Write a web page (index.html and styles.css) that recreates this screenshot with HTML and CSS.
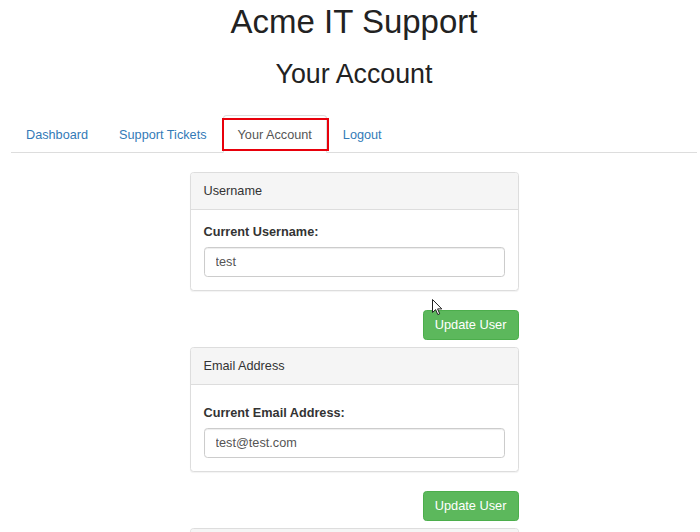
FILE: index.html
```html
<!DOCTYPE html>
<html lang="en">
<head>
<meta charset="utf-8">
<title>Acme IT Support - Your Account</title>
<link rel="stylesheet" href="styles.css">
</head>
<body>
<header class="page-header">
  <h1 class="site-title">Acme IT Support</h1>
  <h2 class="page-title">Your Account</h2>
</header>
<nav>
  <ul class="tabs">
    <li><a class="tab" href="#">Dashboard</a></li>
    <li><a class="tab" href="#">Support Tickets</a></li>
    <li><a class="tab active" href="#">Your Account<span class="highlight"></span></a></li>
    <li><a class="tab" href="#">Logout</a></li>
  </ul>
</nav>
<main class="account">
  <section class="panel">
    <div class="panel-heading">Username</div>
    <div class="panel-body">
      <label class="field-label" for="username">Current Username:</label>
      <input class="field-input" id="username" type="text" value="test">
    </div>
  </section>
  <div class="actions"><button class="btn-success" type="button">Update User</button></div>
  <section class="panel">
    <div class="panel-heading">Email Address</div>
    <div class="panel-body panel-body-spaced">
      <label class="field-label" for="email">Current Email Address:</label>
      <input class="field-input" id="email" type="text" value="test@test.com">
    </div>
  </section>
  <div class="actions"><button class="btn-success" type="button">Update User</button></div>
  <section class="panel panel-partial">
    <div class="panel-heading panel-heading-empty"></div>
  </section>
</main>
<svg class="cursor" width="12" height="18" viewBox="0 0 12 18" aria-hidden="true">
  <path d="M0.5 0.5 L0.5 13.5 L3.6 10.6 L5.8 15.6 L7.7 14.8 L5.6 9.9 L9.8 9.9 Z" fill="#fff" stroke="#222" stroke-width="1" stroke-linejoin="round"/>
</svg>
</body>
</html>
```
FILE: styles.css
```css
html {
  overflow: hidden;
}

body {
  margin: 0;
  padding: 0 3px 0 11px;
  position: relative;
  background: #fff;
  color: #333;
  font-family: "Liberation Sans", Arial, Helvetica, sans-serif;
  font-size: 12.7px;
  line-height: 18px;
}

.page-header {
  text-align: center;
}

.site-title {
  margin: 4px 0 0;
  font-size: 33px;
  line-height: 36px;
  font-weight: 500;
  color: #222;
}

.page-title {
  margin: 19px 0 0;
  font-size: 26.8px;
  line-height: 30px;
  font-weight: 500;
  color: #222;
}

nav {
  margin-top: 26px;
}

.tabs {
  display: flex;
  list-style: none;
  margin: 0;
  padding: 0;
  border-bottom: 1px solid #ddd;
}

.tabs li {
  margin-bottom: -1px;
}

.tab {
  position: relative;
  display: block;
  padding: 10px 14px 8px;
  margin-right: 1px;
  line-height: 18px;
  border: 1px solid transparent;
  border-radius: 3.6px 3.6px 0 0;
  color: #337ab7;
  text-decoration: none;
}

.tab.active {
  color: #555;
  background: #fff;
  border-color: #ddd #ddd transparent;
}

.highlight {
  position: absolute;
  left: -2px;
  top: 2px;
  right: -3px;
  bottom: 1px;
  border: 2px solid #e8000b;
}

.account {
  width: 329px;
  margin: 19px auto 0;
}

.panel {
  background: #fff;
  border: 1px solid #ddd;
  border-radius: 3.6px;
  box-shadow: 0 1px 1px rgba(0, 0, 0, 0.05);
}

.panel-heading {
  padding: 9px 13px;
  line-height: 18px;
  background: #f5f5f5;
  border-bottom: 1px solid #ddd;
  border-radius: 3px 3px 0 0;
  color: #333;
}

.panel-heading-empty {
  height: 18px;
}

.panel-body {
  padding: 13px 13px 13.5px;
}

.panel-body-spaced {
  padding-top: 19.5px;
}

.field-label {
  display: block;
  margin-bottom: 5.5px;
  font-weight: bold;
  line-height: 18px;
  color: #333;
}

.field-input {
  display: block;
  box-sizing: border-box;
  width: 100%;
  height: 30px;
  margin: 0;
  padding: 0 11px;
  border: 1px solid #ccc;
  border-radius: 3.6px;
  box-shadow: inset 0 1px 1px rgba(0, 0, 0, 0.075);
  font-family: inherit;
  font-size: 12.7px;
  color: #555;
  background: #fff;
}

.actions {
  display: flex;
  justify-content: flex-end;
  margin: 18.5px 0 7px;
}

.btn-success {
  box-sizing: border-box;
  height: 30px;
  padding: 1px 11px 0;
  border: 1px solid #4cae4c;
  border-radius: 3.6px;
  background: #5cb85c;
  color: #fff;
  font-family: inherit;
  font-size: 12.8px;
  line-height: 18px;
}

.cursor {
  position: absolute;
  left: 432px;
  top: 299px;
}
```
